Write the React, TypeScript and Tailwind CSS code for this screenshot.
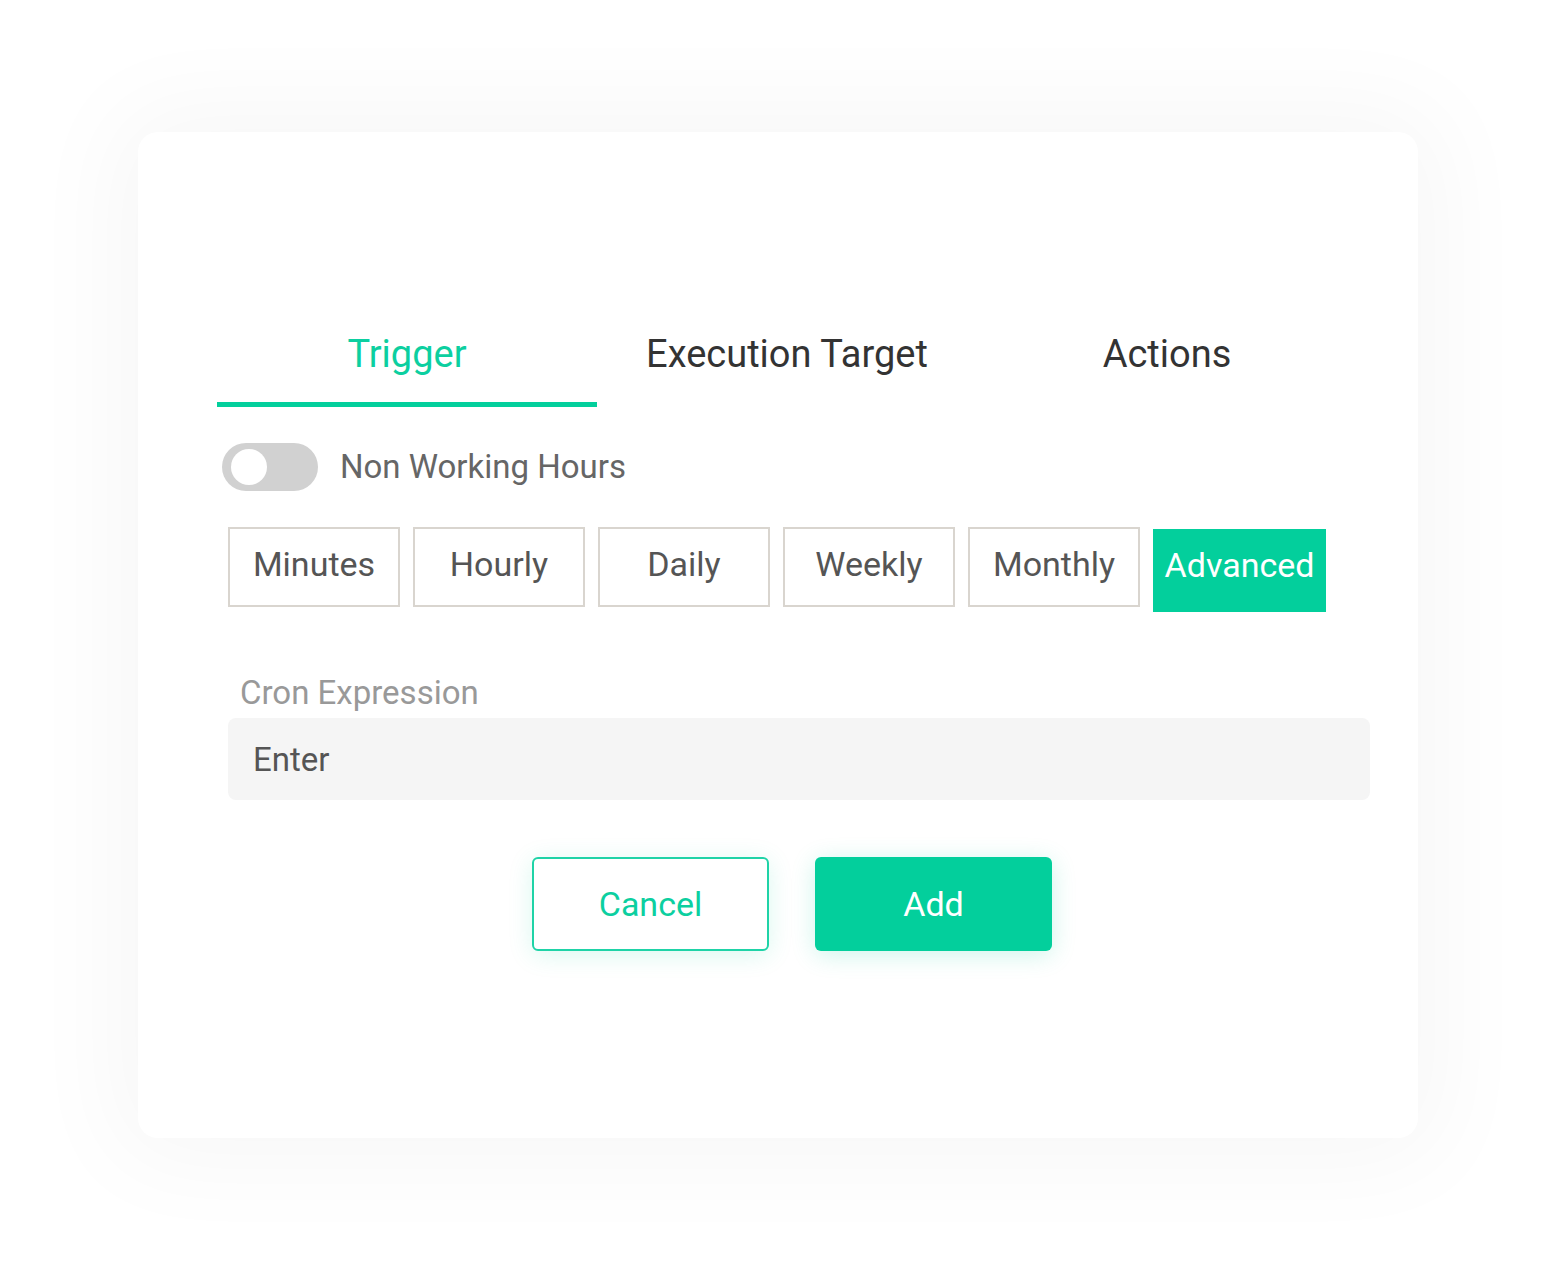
import { useState } from "react";

const periods = ["Minutes", "Hourly", "Daily", "Weekly", "Monthly", "Advanced"];
const tabs = ["Trigger", "Execution Target", "Actions"];

export default function App() {
  const [tab, setTab] = useState("Trigger");
  const [period, setPeriod] = useState("Advanced");
  const [on, setOn] = useState(false);

  return (
    <div
      className="min-h-[1282px] w-[1556px] bg-white pt-[132px] pl-[138px]"
      style={{ fontFamily: "Roboto, 'Liberation Sans', sans-serif" }}
    >
      {/* card */}
      <div className="h-[1006px] w-[1280px] rounded-[20px] bg-white pt-[200px] pl-[79px] shadow-[0_0_100px_24px_rgba(0,0,0,0.035)]">
        {/* tabs */}
        <div className="flex">
          {tabs.map((t) => (
            <button
              key={t}
              onClick={() => setTab(t)}
              className="flex w-[380px] flex-col items-center"
            >
              <span
                className={
                  "text-[38px] leading-[44px] " +
                  (tab === t ? "text-[#0ccfa0]" : "text-[#333333]")
                }
              >
                {t}
              </span>
              <span
                className={
                  "mt-[26px] h-[5px] w-full " +
                  (tab === t ? "bg-[#03cf9c]" : "bg-transparent")
                }
              />
            </button>
          ))}
        </div>

        {/* toggle */}
        <div className="mt-[36px] ml-[5px] flex items-center">
          <button
            onClick={() => setOn(!on)}
            className={
              "flex h-[48px] w-[96px] items-center rounded-full px-[9px] " +
              (on ? "justify-end bg-[#03cf9c]" : "justify-start bg-[#d1d1d1]")
            }
          >
            <span className="h-[36px] w-[36px] rounded-full bg-white" />
          </button>
          <span className="ml-[22px] text-[33px] leading-[40px] text-[#666666]">
            Non Working Hours
          </span>
        </div>

        {/* periods */}
        <div className="mt-[36px] ml-[11px] flex items-start gap-[13px]">
          {periods.map((p) =>
            period === p ? (
              <button
                key={p}
                onClick={() => setPeriod(p)}
                className="mt-[2px] flex h-[83px] w-[173px] items-center justify-center bg-[#03cf9c] pb-[10px] text-[34px] text-white"
              >
                {p}
              </button>
            ) : (
              <button
                key={p}
                onClick={() => setPeriod(p)}
                className="flex h-[80px] w-[172px] items-center justify-center border-2 border-[#d9d5cf] bg-white pb-[6px] text-[34px] text-[#555555]"
              >
                {p}
              </button>
            )
          )}
        </div>

        {/* cron */}
        <div className="ml-[11px] mt-[62px]">
          <div className="pl-[12px] text-[33px] leading-[38px] text-[#999999]">
            Cron Expression
          </div>
          <input
            placeholder="Enter"
            className="mt-[6px] h-[82px] w-[1142px] rounded-[8px] bg-[#f5f5f5] px-[25px] text-[33px] text-[#555555] placeholder:text-[#555555] outline-none"
          />
        </div>

        {/* actions */}
        <div className="mt-[57px] ml-[315px] flex gap-[46px]">
          <button className="h-[94px] w-[237px] rounded-[6px] border-2 border-[#1fd3a7] bg-white text-[34px] text-[#0ccfa0] shadow-[0_4px_24px_rgba(3,207,156,0.15)]">
            Cancel
          </button>
          <button className="h-[94px] w-[237px] rounded-[6px] bg-[#03cf9c] text-[34px] text-white shadow-[0_4px_24px_rgba(3,207,156,0.2)]">
            Add
          </button>
        </div>
      </div>
    </div>
  );
}
